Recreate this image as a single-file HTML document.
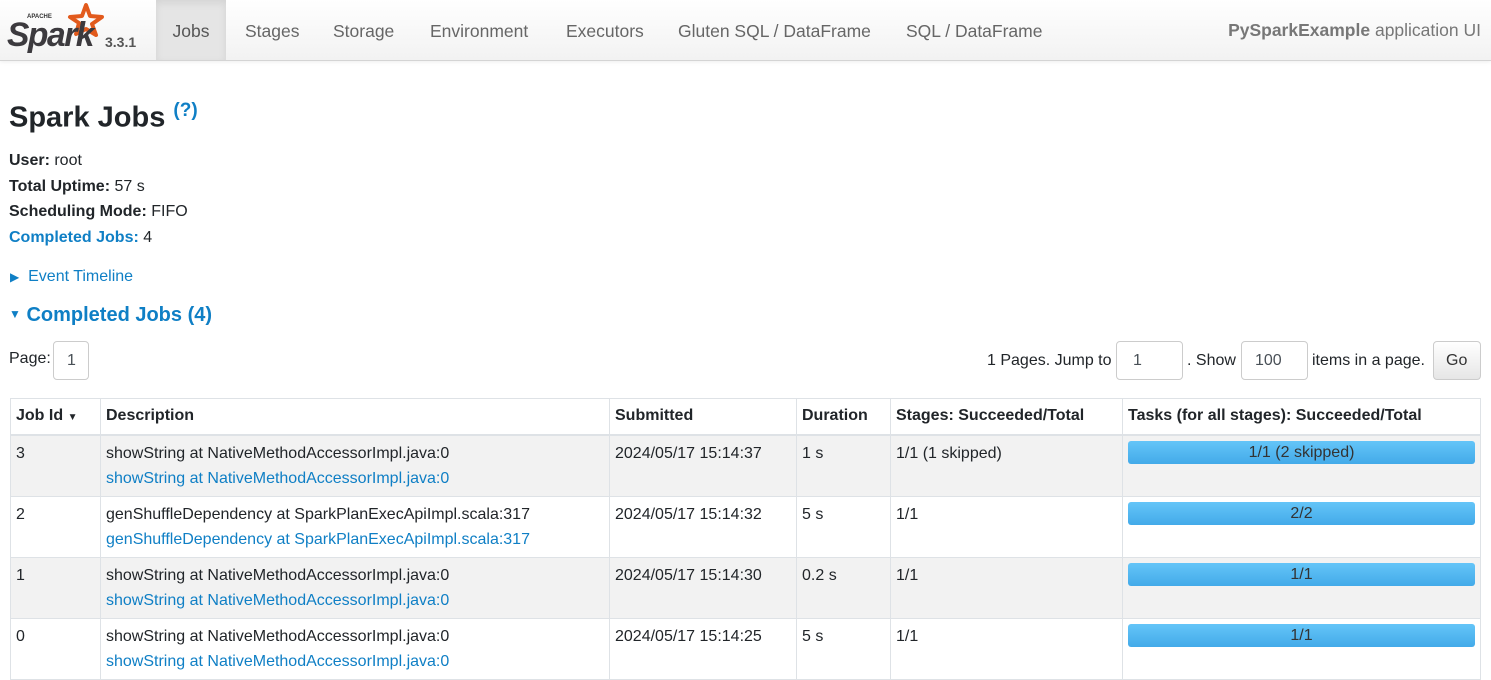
<!DOCTYPE html>
<html><head><meta charset="utf-8"><style>
*{box-sizing:border-box}
body{margin:0;font-family:"Liberation Sans",sans-serif;font-size:16px;color:#212529;background:#fff;width:1491px;height:676px;overflow:hidden;position:relative}
.nav{position:absolute;left:0;top:0;width:1491px;height:61px;background:linear-gradient(#fff,#f2f2f2);border-bottom:1px solid #d4d4d4;box-shadow:0 1px 4px rgba(0,0,0,.07)}
.nav a{position:absolute;top:0;height:60px;line-height:62px;font-size:17.5px;color:#666;text-decoration:none}
.nav a.act{background:#e5e5e5;box-shadow:inset 0 3px 8px rgba(0,0,0,.08);color:#555}
.abs{position:absolute;white-space:nowrap}
.blue{color:#0f7fc5}
b{font-weight:bold}
.inp{position:absolute;border:1px solid #ccc;border-radius:4px;height:39px;line-height:37px;padding-left:16px;background:#fff;color:#495057}
table{position:absolute;left:10px;top:398px;border-collapse:collapse;width:1471px}
td,th{border:1px solid #dee2e6;vertical-align:top;padding:5px 5px;text-align:left;font-size:16px;line-height:25px}
th{height:36px;padding:4px 5px;border-bottom:2px solid #dee2e6}
tr.g td{background:#f2f2f2}
td{height:61px}
.bar{height:23px;margin-top:0;border-radius:3px;background:linear-gradient(#64c5f8,#43aae9);text-align:center;line-height:23px;color:#333}
</style></head><body>
<div class="nav">
<svg class="abs" style="left:6px;top:2px" width="100" height="52" viewBox="0 0 100 52">
<text x="21" y="16" font-size="6" font-weight="bold" fill="#333" font-family="Liberation Sans">APACHE</text>
<path d="M80 3 L84 14 L96 15 L86 22 L90 33 L80 27 L70 32 L73 21 L64 15 L76 14 Z" fill="none" stroke="#e25a1c" stroke-width="4" stroke-linejoin="round"/>
<text x="1" y="44" font-size="34" font-style="italic" font-weight="bold" fill="#3c3a3e" font-family="Liberation Sans" letter-spacing="-1.5" textLength="86" lengthAdjust="spacingAndGlyphs">Spark</text>
</svg>
<span class="abs" style="left:105px;top:34px;font-size:14px;font-weight:bold;color:#555">3.3.1</span>
<a class="act" style="left:156px;width:70px;text-align:center">Jobs</a>
<a style="left:245px">Stages</a>
<a style="left:333px">Storage</a>
<a style="left:430px">Environment</a>
<a style="left:566px">Executors</a>
<a style="left:678px">Gluten SQL / DataFrame</a>
<a style="left:906px">SQL / DataFrame</a>
<span class="abs" style="right:10px;top:20px;font-size:17.5px;color:#777"><b>PySparkExample</b> application UI</span>
</div>
<div class="abs" style="left:9px;top:100px;font-size:29px;font-weight:bold">Spark Jobs <sup class="blue" style="font-size:19px">(?)</sup></div>
<div class="abs" style="left:9px;top:148px;line-height:25.5px"><b>User:</b> root<br><b>Total Uptime:</b> 57 s<br><b>Scheduling Mode:</b> FIFO<br><span class="blue"><b>Completed Jobs:</b></span> 4</div>
<div class="abs blue" style="left:10px;top:268px"><span style="font-size:12px">&#9654;</span>&nbsp; Event Timeline</div>
<div class="abs blue" style="left:9px;top:304px;font-size:20px;font-weight:bold"><span style="font-size:12px;vertical-align:3px">&#9660;</span> Completed Jobs (4)</div>
<div class="abs" style="left:9px;top:350px">Page:</div>
<div class="inp" style="left:53px;top:341px;width:36px;padding-left:13px">1</div>
<div class="abs" style="left:987px;top:352px">1 Pages. Jump to</div>
<div class="inp" style="left:1116px;top:341px;width:67px">1</div>
<div class="abs" style="left:1187px;top:352px">. Show</div>
<div class="inp" style="left:1241px;top:341px;width:67px;padding-left:13px">100</div>
<div class="abs" style="left:1312px;top:352px">items in a page.</div>
<div class="inp" style="left:1433px;top:341px;width:48px;padding-left:12px;background:linear-gradient(#fff,#e6e6e6);color:#333">Go</div>
<table>
<tr><th style="width:90px">Job Id <span style="font-size:10px">&#9660;</span></th><th style="width:509px">Description</th><th style="width:187px">Submitted</th><th style="width:94px">Duration</th><th style="width:232px">Stages: Succeeded/Total</th><th>Tasks (for all stages): Succeeded/Total</th></tr>
<tr class="g"><td>3</td><td>showString at NativeMethodAccessorImpl.java:0<br><span class="blue">showString at NativeMethodAccessorImpl.java:0</span></td><td>2024/05/17 15:14:37</td><td>1 s</td><td>1/1 (1 skipped)</td><td><div class="bar">1/1 (2 skipped)</div></td></tr>
<tr><td>2</td><td>genShuffleDependency at SparkPlanExecApiImpl.scala:317<br><span class="blue">genShuffleDependency at SparkPlanExecApiImpl.scala:317</span></td><td>2024/05/17 15:14:32</td><td>5 s</td><td>1/1</td><td><div class="bar">2/2</div></td></tr>
<tr class="g"><td>1</td><td>showString at NativeMethodAccessorImpl.java:0<br><span class="blue">showString at NativeMethodAccessorImpl.java:0</span></td><td>2024/05/17 15:14:30</td><td>0.2 s</td><td>1/1</td><td><div class="bar">1/1</div></td></tr>
<tr><td>0</td><td>showString at NativeMethodAccessorImpl.java:0<br><span class="blue">showString at NativeMethodAccessorImpl.java:0</span></td><td>2024/05/17 15:14:25</td><td>5 s</td><td>1/1</td><td><div class="bar">1/1</div></td></tr>
</table>
</body></html>
